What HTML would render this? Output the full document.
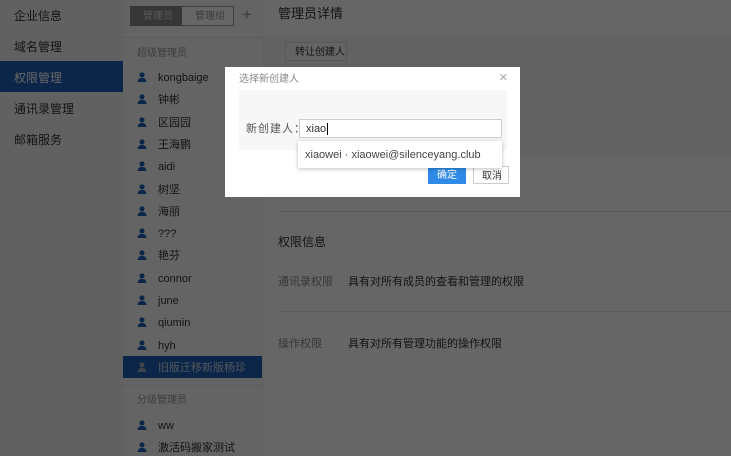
<!DOCTYPE html>
<html><head><meta charset="utf-8"><style>
*{margin:0;padding:0;box-sizing:border-box}
body{width:731px;height:456px;overflow:hidden;position:relative;font-family:"Liberation Sans","Noto Sans CJK SC",sans-serif;font-size:12px;line-height:14px;color:#333;background:#fff}
.a{position:absolute;white-space:nowrap}
.side{left:0;top:0;width:123px;height:456px;background:#f2f2f2}
.mid{left:123px;top:0;width:140px;height:456px;background:#fafafa;border-right:1px solid #eee}
.u{display:inline-block;width:10px;height:10px;vertical-align:-1px;margin-right:11px}
.ov{left:0;top:0;width:731px;height:456px;background:rgba(0,0,0,.6)}
</style></head><body>
<div class="a side"></div>
<div class="a" style="left:14px;top:9px">企业信息</div>
<div class="a" style="left:14px;top:40px">域名管理</div>
<div class="a" style="left:0;top:61px;width:123px;height:31px;background:#1d5fb5"></div>
<div class="a" style="left:14px;top:71px;color:#fff">权限管理</div>
<div class="a" style="left:14px;top:102px">通讯录管理</div>
<div class="a" style="left:14px;top:133px">邮箱服务</div>
<div class="a mid"></div>
<div class="a" style="left:130px;top:6px;width:104px;height:20px;border:1px solid #999;background:#fff"></div>
<div class="a" style="left:130px;top:6px;width:52px;height:20px;background:#888"></div>
<div class="a" style="left:143px;top:10px;font-size:10px;color:#ddd">管理员</div>
<div class="a" style="left:195px;top:10px;font-size:10px;color:#999">管理组</div>
<div class="a" style="left:242px;top:8px;font-size:17px;color:#999">+</div>
<div class="a" style="left:123px;top:37px;width:140px;height:1px;background:#e6e6e6"></div>
<div class="a" style="left:137px;top:47px;font-size:10px;color:#999">超级管理员</div>
<div class="a" style="left:123px;top:356px;width:139px;height:22px;background:#1d5fb5"></div>
<div class="a" style="left:123px;top:385px;width:140px;height:1px;background:#e6e6e6"></div>
<div class="a" style="left:137px;top:394px;font-size:10px;color:#999">分级管理员</div>
<div id="list"></div>
<div class="a" style="left:278px;top:7px;font-size:13px">管理员详情</div>
<div class="a" style="left:263px;top:37px;width:468px;height:120px;background:#f6f6f6"></div>
<div class="a" style="left:285px;top:42px;width:62px;height:19px;border:1px solid #ddd;background:#fafafa;font-size:10px;padding:3px 0 0 9px">转让创建人</div>
<div class="a" style="left:278px;top:211px;width:453px;height:1px;background:#e6e6e6"></div>
<div class="a" style="left:278px;top:235px;font-size:12px">权限信息</div>
<div class="a" style="left:278px;top:275px;font-size:11px;color:#888">通讯录权限</div>
<div class="a" style="left:348px;top:275px;font-size:11px">具有对所有成员的查看和管理的权限</div>
<div class="a" style="left:278px;top:311px;width:453px;height:1px;background:#e6e6e6"></div>
<div class="a" style="left:278px;top:337px;font-size:11px;color:#888">操作权限</div>
<div class="a" style="left:348px;top:337px;font-size:11px">具有对所有管理功能的操作权限</div>
<div class="a ov"></div>
<div class="a" style="left:225px;top:67px;width:295px;height:130px;background:#fff"></div>
<div class="a" style="left:239px;top:73px;font-size:10px;color:#888">选择新创建人</div>
<div class="a" style="left:499px;top:71px;font-size:15px;color:#aaa">×</div>
<div class="a" style="left:239px;top:90px;width:268px;height:60px;background:#f7f7f7"></div>
<div class="a" style="left:246px;top:122px;font-size:11px;color:#555;letter-spacing:1px">新创建人：</div>
<div class="a" style="left:299px;top:119px;width:203px;height:19px;border:1px solid #ccc;background:#fff;padding:2px 0 0 6px;font-size:11px;color:#333">xiao<span style="border-left:1px solid #000;margin-left:1px"></span></div>
<div class="a" style="left:428px;top:166px;width:38px;height:18px;background:#2e8ae6;color:#fff;font-size:10px;padding:3px 0 0 9px">确定</div>
<div class="a" style="left:473px;top:166px;width:36px;height:18px;border:1px solid #ccc;background:#fff;font-size:10px;padding:3px 0 0 8px">取消</div>
<div class="a" style="left:298px;top:141px;width:204px;height:27px;background:#fff;box-shadow:0 1px 4px rgba(0,0,0,.25);padding:7px 0 0 7px;font-size:11px;color:#444">xiaowei · xiaowei@silenceyang.club</div>
<script>
var n=["kongbaige","钟彬","区园园","王海鹏","aidi","树坚","海丽","???","艳芬","connor","june","qiumin","hyh","旧版迁移新版杨珍"];
var h="";
function row(t,yy,act){return '<div class="a" style="left:137px;top:'+yy+'px;font-size:11px;color:'+(act?'#cfd8e6':'#333')+'"><svg class="u" viewBox="0 0 11 11"><circle cx="5.5" cy="3.2" r="2.8" fill="'+(act?'#9ab':'#1d5fb5')+'"/><path d="M0.5 11 Q1 6.5 5.5 6.5 Q10 6.5 10.5 11Z" fill="'+(act?'#9ab':'#1d5fb5')+'"/></svg>'+t+'</div>';}
for(var i=0;i<n.length;i++){h+=row(n[i],Math.round(71+i*22.3),i==13);}
h+=row("ww",419,0)+row("激活码搬家测试",441,0);
document.getElementById("list").innerHTML=h;
</script>
</body></html>
